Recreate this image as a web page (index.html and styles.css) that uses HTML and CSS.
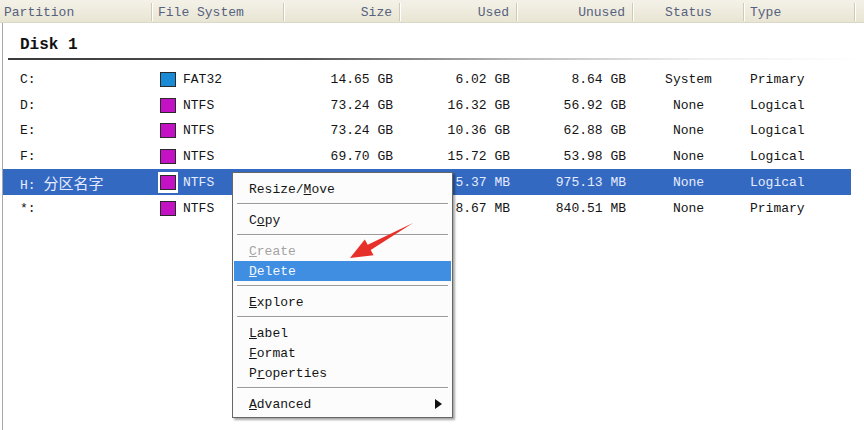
FILE: index.html
```html
<!DOCTYPE html>
<html lang="en">

<head>
    <meta charset="UTF-8">
    <title>Partition Manager</title>
    <link rel="stylesheet" href="styles.css">
</head>

<body>
    <div class="window">
        <div class="head">
            <div class="hcell first">Partition</div>
            <div class="hcell">File System</div>
            <div class="hcell num">Size</div>
            <div class="hcell num">Used</div>
            <div class="hcell num">Unused</div>
            <div class="hcell mid">Status</div>
            <div class="hcell">Type</div>
            <div class="hcell"></div>
        </div>

        <div class="list">
            <div class="disk">
                <div class="disk-name">Disk 1</div>
                <div class="disk-rule"></div>
            </div>

            <div class="row">
                <div class="cell name">C:</div>
                <div class="cell fs"><span class="swatch fat"></span>FAT32</div>
                <div class="cell num">14.65 GB</div>
                <div class="cell num">6.02 GB</div>
                <div class="cell num">8.64 GB</div>
                <div class="cell mid">System</div>
                <div class="cell type">Primary</div>
            </div>
            <div class="row">
                <div class="cell name">D:</div>
                <div class="cell fs"><span class="swatch ntfs"></span>NTFS</div>
                <div class="cell num">73.24 GB</div>
                <div class="cell num">16.32 GB</div>
                <div class="cell num">56.92 GB</div>
                <div class="cell mid">None</div>
                <div class="cell type">Logical</div>
            </div>
            <div class="row">
                <div class="cell name">E:</div>
                <div class="cell fs"><span class="swatch ntfs"></span>NTFS</div>
                <div class="cell num">73.24 GB</div>
                <div class="cell num">10.36 GB</div>
                <div class="cell num">62.88 GB</div>
                <div class="cell mid">None</div>
                <div class="cell type">Logical</div>
            </div>
            <div class="row">
                <div class="cell name">F:</div>
                <div class="cell fs"><span class="swatch ntfs"></span>NTFS</div>
                <div class="cell num">69.70 GB</div>
                <div class="cell num">15.72 GB</div>
                <div class="cell num">53.98 GB</div>
                <div class="cell mid">None</div>
                <div class="cell type">Logical</div>
            </div>
            <div class="row selected">
                <div class="cell name">H: <span class="cjk">分区名字</span></div>
                <div class="cell fs"><span class="swatch-box"><span class="swatch ntfs"></span></span>NTFS</div>
                <div class="cell num"></div>
                <div class="cell num">5.37 MB</div>
                <div class="cell num">975.13 MB</div>
                <div class="cell mid">None</div>
                <div class="cell type">Logical</div>
            </div>
            <div class="row">
                <div class="cell name">*:</div>
                <div class="cell fs"><span class="swatch ntfs"></span>NTFS</div>
                <div class="cell num"></div>
                <div class="cell num">8.67 MB</div>
                <div class="cell num">840.51 MB</div>
                <div class="cell mid">None</div>
                <div class="cell type">Primary</div>
            </div>
        </div>

        <!-- context menu -->
        <div class="menu">
            <div class="item">Resize/<u>M</u>ove</div>
            <div class="sep"></div>
            <div class="item">C<u>o</u>py</div>
            <div class="sep"></div>
            <div class="item disabled"><u>C</u>reate</div>
            <div class="item active"><u>D</u>elete</div>
            <div class="sep"></div>
            <div class="item"><u>E</u>xplore</div>
            <div class="sep"></div>
            <div class="item"><u>L</u>abel</div>
            <div class="item"><u>F</u>ormat</div>
            <div class="item">P<u>r</u>operties</div>
            <div class="sep"></div>
            <div class="item sub"><span><u>A</u>dvanced</span>
                <svg width="7" height="10" viewBox="0 0 7 10"><polygon points="0,0 7,5 0,10" fill="#111" /></svg>
            </div>
        </div>

        <svg class="pointer" width="80" height="45" viewBox="0 0 80 45">
            <polygon points="10,40 33.6,37.2 30.7,31.9 73,5 27.7,26.7 24.8,21.4" fill="#e8302a" />
        </svg>
    </div>
</body>

</html>
```

FILE: styles.css
```css
body {
    margin: 0;
    padding: 0;
    background-color: #ffffff;
    font-family: "Liberation Mono", "Noto Sans CJK SC", monospace;
    font-size: 13px;
    color: #141414;
}

.window {
    position: relative;
    width: 864px;
    height: 430px;
    display: flex;
    flex-direction: column;
    overflow: hidden;
}

.head {
    display: grid;
    grid-template-columns: 152px 132px 116px 117px 116px 111px 111px 1fr;
    height: 22px;
    background: linear-gradient(#f4f2e8, #e9e5d4);
    border-bottom: 1px solid #dcd8c6;
    color: #56617f;
}

.hcell {
    position: relative;
    line-height: 22px;
    padding: 2px 6px 0 6px;
    white-space: nowrap;
}

.hcell::after {
    content: "";
    position: absolute;
    right: 0;
    top: 3px;
    bottom: 3px;
    width: 1px;
    background-color: #cfcab6;
    box-shadow: 1px 0 0 #ffffff;
}

.hcell:last-child::after {
    display: none;
}

.hcell.first {
    padding-left: 4px;
}

.hcell.num {
    text-align: right;
    padding-right: 8px;
}

.hcell.mid {
    text-align: center;
}

.list {
    flex: 1;
    margin-left: 2px;
    border-left: 1px solid #a8a8a8;
}

.disk {
    padding: 12px 0 6px 0;
}

.disk-name {
    margin-left: 17px;
    font-size: 16px;
    font-weight: bold;
    line-height: 20px;
    color: #111;
}

.disk-rule {
    margin: 3px 0 0 5px;
    height: 2px;
    background: linear-gradient(to right, #3a3a3a 0, #555 35%, #bbb 60%, #eee 80%, #fff 100%);
}

.row {
    display: grid;
    grid-template-columns: 149px 132px 116px 117px 116px 111px 107px;
    height: 25.8px;
    align-items: center;
    width: 848px;
    padding-top: 1px;
    box-sizing: border-box;
}

.cell {
    white-space: nowrap;
}

.cell.name {
    padding-left: 17px;
}

.cell.fs {
    display: flex;
    align-items: center;
    padding-left: 8px;
}

.cell.num {
    text-align: right;
    padding-right: 7px;
}

.cell.mid {
    text-align: center;
}

.cell.type {
    padding-left: 6px;
}

.cjk {
    font-family: "Noto Sans CJK SC", sans-serif;
    font-size: 15px;
}

.swatch {
    display: inline-block;
    width: 14px;
    height: 13px;
    border: 1px solid #2a2a2a;
    margin-right: 7px;
}

.swatch.fat {
    background-color: #1a8ad4;
}

.swatch.ntfs {
    background-color: #c312c3;
}

.swatch-box {
    display: inline-flex;
    background-color: #ffffff;
    padding: 3px 2px 3px 2px;
    margin: 0 5px 0 -2px;
}

.swatch-box .swatch {
    margin-right: 0;
}

.row.selected {
    background-color: #3469c2;
    color: #e6ecff;
}

.menu {
    position: absolute;
    left: 232px;
    top: 172px;
    width: 221px;
    box-sizing: border-box;
    padding: 6px 1px 3px 1px;
    background-color: #fcfcfc;
    border: 1px solid #666666;
    box-shadow: 2px 2px 2px rgba(0, 0, 0, 0.35);
    color: #151515;
}

.item {
    height: 20px;
    line-height: 21px;
    padding-left: 15px;
}

.item.disabled {
    color: #a3a3a3;
    text-shadow: 1px 1px 0 #ffffff;
}

.item.active {
    background-color: #3f8ee2;
    color: #f4f8ff;
}

.item.sub {
    display: flex;
    align-items: center;
    justify-content: space-between;
    padding-right: 9px;
}

.sep {
    margin: 4px 3px 5px 3px;
    border-top: 1px solid #9a9a9a;
    border-bottom: 1px solid #ffffff;
}

.pointer {
    position: absolute;
    left: 340px;
    top: 218px;
}
```
